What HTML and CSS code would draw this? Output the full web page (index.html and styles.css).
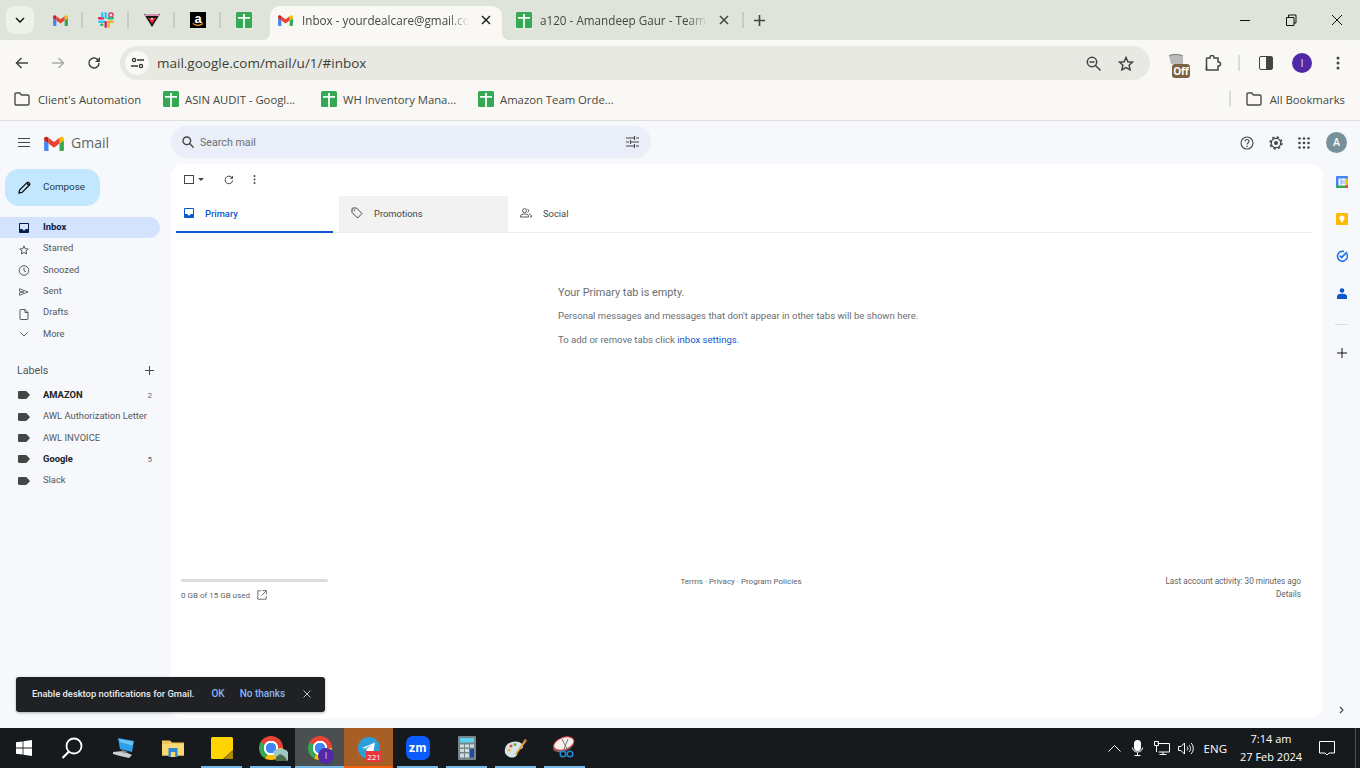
FILE: index.html
```html
<!DOCTYPE html>
<html lang="en">
<head>
    <meta charset="UTF-8">
    <title>Inbox - yourdealcare@gmail.com</title>
    <link rel="stylesheet" href="styles.css">
</head>

<body>
    <svg class="defs">
        <symbol id="ic-gmail" viewBox="0 0 52 42">
            <path fill="#4285f4" d="M3.5 42h8V22.5L0 14v24.5A3.5 3.5 0 0 0 3.5 42z"/>
            <path fill="#34a853" d="M40.5 42h8a3.5 3.5 0 0 0 3.5-3.5V14L40.5 22.5z"/>
            <path fill="#fbbc04" d="M40.5 7.5v15L52 14V9.5c0-4.3-4.9-6.7-8.3-4.2z"/>
            <path fill="#ea4335" d="M11.5 22.5v-15L26 18.4 40.5 7.5v15L26 33.4z"/>
            <path fill="#c5221f" d="M0 9.5V14l11.5 8.5v-15L8.3 5.3C4.9 2.8 0 5.2 0 9.5z"/>
        </symbol>
        <symbol id="ic-sheet" viewBox="0 0 16 16">
            <rect width="16" height="16" rx="1.5" fill="#34a853"/>
            <rect x="2" y="5" width="12" height="1.700" fill="#fff"/>
            <rect x="7.100" y="2" width="1.800" height="14" fill="#fff"/>
        </symbol>
        <symbol id="ic-folder" viewBox="0 0 16 14">
            <path fill="none" stroke="#4a4a46" stroke-width="1.4" d="M1 2.2c0-.7.5-1.2 1.2-1.2h3.6l1.6 2h6.4c.7 0 1.2.5 1.2 1.2v7.6c0 .7-.5 1.2-1.2 1.2H2.2c-.7 0-1.2-.5-1.2-1.2z"/>
        </symbol>
        <symbol id="ic-tag" viewBox="0 0 12 8">
            <path fill="#444746" d="M1.2 0h6.6c.4 0 .7.2 1 .5L12 4 8.800 7.500c-.3.3-.6.5-1 .5H1.200C.5 8 0 7.500 0 6.800V1.200C0 .5.500 0 1.200 0z"/>
        </symbol>
    </svg>

    <div class="tabstrip">
        <div class="tab-search">
            <svg width="10" height="6" viewBox="0 0 10 6"><path d="M1 1l4 4 4-4" fill="none" stroke="#1f1f1f" stroke-width="1.6"/></svg>
        </div>
        <div class="pinned">
            <svg width="15" height="12"><use href="#ic-gmail"/></svg>
        </div>
        <div class="pinned">
            <svg width="16" height="16" viewBox="0 0 16 16">
                <rect x="0" y="5" width="6" height="2.400" rx="1.200" fill="#e01e5a"/>
                <rect x="3" y="0" width="2.400" height="6" rx="1.200" fill="#36c5f0"/>
                <rect x="6.500" y="0" width="2.400" height="7" rx="1.200" fill="#36c5f0"/>
                <rect x="0" y="8.500" width="7" height="2.400" rx="1.200" fill="#36c5f0"/>
                <circle cx="13" cy="3" r="2.200" fill="none" stroke="#e01e5a" stroke-width="1.200"/>
                <rect x="9.500" y="5" width="6.500" height="2.400" rx="1.200" fill="#2eb67d"/>
                <rect x="9.500" y="8.500" width="6.500" height="2.400" rx="1.200" fill="#ecb22e"/>
                <rect x="9.500" y="9" width="2.400" height="7" rx="1.200" fill="#ecb22e"/>
                <rect x="6.500" y="9" width="2.400" height="7" rx="1.200" fill="#e01e5a"/>
                <rect x="2" y="11.500" width="3.500" height="2.400" rx="1.200" fill="#2eb67d"/>
            </svg>
        </div>
        <div class="pinned">
            <svg width="16" height="16" viewBox="0 0 16 16">
                <path d="M0 2h16L8 15z" fill="#111"/>
                <path d="M4 6h8l-4 6z" fill="#e2233d"/>
                <path d="M1 2h14v2H1z" fill="#d58fb0"/>
                <path d="M6.500 6h3L8 8.500z" fill="#dfe4da"/>
            </svg>
        </div>
        <div class="pinned">
            <svg width="16" height="16" viewBox="0 0 16 16">
                <rect width="16" height="16" fill="#000"/>
                <text x="8" y="10.500" text-anchor="middle" class="amz-a">a</text>
                <path d="M3 11.500c3 2.200 7 2.200 10 0" fill="none" stroke="#f59a23" stroke-width="1.300"/>
            </svg>
        </div>
        <div class="pinned last">
            <svg width="16" height="16"><use href="#ic-sheet"/></svg>
        </div>

        <div class="tab active">
            <svg width="15" height="12"><use href="#ic-gmail"/></svg>
            <span class="tab-title">Inbox - yourdealcare@gmail.com</span>
            <svg class="tab-x" width="10" height="10" viewBox="0 0 10 10"><path d="M1 1l8 8M9 1l-8 8" stroke="#1f1f1f" stroke-width="1.500"/></svg>
        </div>
        <div class="tab">
            <svg width="16" height="16"><use href="#ic-sheet"/></svg>
            <span class="tab-title">a120 - Amandeep Gaur - Team Tracker</span>
            <svg class="tab-x" width="10" height="10" viewBox="0 0 10 10"><path d="M1 1l8 8M9 1l-8 8" stroke="#444" stroke-width="1.500"/></svg>
        </div>
        <div class="tab-sep"></div>
        <svg class="new-tab" width="11" height="11" viewBox="0 0 11 11"><path d="M5.500 0v11M0 5.500h11" stroke="#444" stroke-width="1.600"/></svg>

        <div class="win-btns">
            <svg width="46" height="14" viewBox="0 0 46 14"><path d="M18 7.500h10" stroke="#111"/></svg>
            <svg width="46" height="14" viewBox="0 0 46 14"><path d="M18.500 4.500h7.500v8h-7.500zM20.500 4.500v-2.500h7.500v8h-2" fill="none" stroke="#111"/></svg>
            <svg width="46" height="14" viewBox="0 0 46 14"><path d="M18 2l10 10M28 2l-10 10" stroke="#111"/></svg>
        </div>
    </div>

    <div class="chrome-bar">
        <div class="toolbar">
            <svg class="nav-ic" width="14" height="12" viewBox="0 0 14 12"><path d="M13 6H2M6.500 1L1.500 6l5 5" fill="none" stroke="#444" stroke-width="1.500"/></svg>
            <svg class="nav-ic" width="14" height="12" viewBox="0 0 14 12"><path d="M1 6h11M7.500 1l5 5-5 5" fill="none" stroke="#aaa" stroke-width="1.500"/></svg>
            <svg class="nav-ic" width="14" height="14" viewBox="0 0 14 14"><path d="M12 7a5 5 0 1 1-1.500-3.600L12.500 5" fill="none" stroke="#444" stroke-width="1.500"/><path d="M13 1v5H8z" fill="#444"/></svg>
            <div class="omnibox">
                <div class="site-chip">
                    <svg width="13" height="12" viewBox="0 0 13 12"><g fill="none" stroke="#333" stroke-width="1.300"><circle cx="3" cy="3" r="1.600"/><path d="M6 3h7M0 9h7"/><circle cx="10" cy="9" r="1.600"/></g></svg>
                </div>
                <span class="url">mail.google.com/mail/u/1/#inbox</span>
                <svg class="omni-zoom" width="15" height="15" viewBox="0 0 15 15"><g fill="none" stroke="#444" stroke-width="1.500"><circle cx="6" cy="6" r="4.700"/><path d="M9.500 9.500l5 5M3.500 6h5"/></g></svg>
                <svg class="omni-star" width="16" height="15" viewBox="0 0 16 15"><path d="M8 1.500l1.900 4.200 4.600.5-3.400 3.100 1 4.500L8 11.500l-4.100 2.300 1-4.500L1.500 6.200l4.600-.5z" fill="none" stroke="#444" stroke-width="1.500"/></svg>
            </div>
            <div class="off-ext">
                <svg width="16" height="12" viewBox="0 0 16 12"><path d="M1 3c3-3 10-3 14 0v8H3z" fill="#bbb"/><path d="M1 3c3-2 10-2 14 0" fill="none" stroke="#777"/></svg>
                <span class="off-badge">Off</span>
            </div>
            <svg class="puzzle" width="17" height="17" viewBox="0 0 17 17"><path d="M1.500 3.500h3.500v-.5a2 2 0 0 1 4 0v.5h4v4h.5a2 2 0 0 1 0 4h-.5v4h-11.500v-3.500" fill="none" stroke="#444" stroke-width="1.500" transform="translate(0 -0.500)"/><path d="M1.500 3v12" stroke="#444" stroke-width="1.500"/></svg>
            <div class="tb-sep"></div>
            <div class="side-panel"><span></span></div>
            <div class="profile">I</div>
            <svg class="tb-more" width="4" height="14" viewBox="0 0 4 14"><g fill="#444"><circle cx="2" cy="2" r="1.500"/><circle cx="2" cy="7" r="1.500"/><circle cx="2" cy="12" r="1.500"/></g></svg>
        </div>

        <div class="bookmarks">
            <div class="bm bm-w1"><svg width="16" height="14"><use href="#ic-folder"/></svg>Client's Automation</div>
            <div class="bm bm-w2"><svg width="16" height="16"><use href="#ic-sheet"/></svg>ASIN AUDIT - Googl...</div>
            <div class="bm bm-w3"><svg width="16" height="16"><use href="#ic-sheet"/></svg>WH Inventory Mana...</div>
            <div class="bm"><svg width="16" height="16"><use href="#ic-sheet"/></svg>Amazon Team Orde...</div>
            <div class="bm-right">
                <div class="tb-sep"></div>
                <div class="bm"><svg width="16" height="14"><use href="#ic-folder"/></svg>All Bookmarks</div>
            </div>
        </div>
    </div>

    <div class="gmail">
        <div class="gm-head">
            <div class="brand">
                <div class="burger"><span></span><span></span><span></span></div>
                <svg width="20" height="16"><use href="#ic-gmail"/></svg>
                <span class="brand-name">Gmail</span>
            </div>
            <div class="search">
                <svg width="12" height="12" viewBox="0 0 12 12"><g fill="none" stroke="#444746" stroke-width="1.400"><circle cx="4.800" cy="4.800" r="3.800"/><path d="M7.600 7.600l4 4"/></g></svg>
                <span class="search-txt">Search mail</span>
                <svg class="search-opt" width="13" height="12" viewBox="0 0 13 12"><path d="M0 2h8M10 2h3M8.500 0v4M0 6h3M5 6h8M4.500 4v4M0 10h8M10 10h3M8.500 8v4" stroke="#444746" stroke-width="1.100"/></svg>
            </div>
            <div class="gm-actions">
                <svg width="14" height="14" viewBox="0 0 14 14"><circle cx="7" cy="7" r="6" fill="none" stroke="#444746" stroke-width="1.100"/><path d="M5 5.400c0-2.600 4-2.600 4 0 0 1.600-2 1.500-2 3.100" fill="none" stroke="#444746" stroke-width="1.100"/><circle cx="7" cy="10.300" r=".8" fill="#444746"/></svg>
                <svg width="14" height="14" viewBox="0 0 14 14"><circle cx="7" cy="7" r="4.700" fill="none" stroke="#444746" stroke-width="1.300"/><circle cx="7" cy="7" r="6" fill="none" stroke="#444746" stroke-width="1.400" stroke-dasharray="2.400 2.310"/><circle cx="7" cy="7" r="2" fill="#444746"/></svg>
                <svg width="12" height="12" viewBox="0 0 12 12"><g fill="#444746"><circle cx="1.500" cy="1.500" r="1.300"/><circle cx="6" cy="1.500" r="1.300"/><circle cx="10.500" cy="1.500" r="1.300"/><circle cx="1.500" cy="6" r="1.300"/><circle cx="6" cy="6" r="1.300"/><circle cx="10.500" cy="6" r="1.300"/><circle cx="1.500" cy="10.500" r="1.300"/><circle cx="6" cy="10.500" r="1.300"/><circle cx="10.500" cy="10.500" r="1.300"/></g></svg>
                <div class="gm-avatar">A</div>
            </div>
        </div>

        <div class="gm-body">
            <div class="sidebar">
                <div class="compose">
                    <svg width="13" height="13" viewBox="0 0 13 13"><path d="M1 12l.6-3L9 1.600a1.300 1.300 0 0 1 1.800 0l.6.6a1.300 1.300 0 0 1 0 1.800L4 11.400z" fill="none" stroke="#111" stroke-width="1.300"/><path d="M8 2.500L10.500 5 11.500 4 9.500 1.500z" fill="#111"/></svg>
                    <span>Compose</span>
                </div>
                <div class="nav">
                    <div class="nav-row selected">
                        <svg width="10" height="10" viewBox="0 0 10 10"><path fill="#041e49" d="M1 0h8a1 1 0 0 1 1 1v8a1 1 0 0 1-1 1H1a1 1 0 0 1-1-1V1a1 1 0 0 1 1-1zm0 1v5h2.500c0 .9.700 1.500 1.500 1.500S6.500 6.900 6.500 6H9V1z"/></svg>
                        <span>Inbox</span>
                    </div>
                    <div class="nav-row">
                        <svg class="low" width="10" height="10" viewBox="0 0 10 10"><path d="M5 .9l1.200 2.800 3 .3-2.300 2 .7 3L5 7.400 2.400 9l.7-3-2.300-2 3-.3z" fill="none" stroke="#444746" stroke-width=".9"/></svg>
                        <span>Starred</span>
                    </div>
                    <div class="nav-row">
                        <svg width="11" height="11" viewBox="0 0 11 11"><circle cx="5.500" cy="5.500" r="4.800" fill="none" stroke="#444746" stroke-width=".9"/><path d="M5.500 2.500v3.200l2 1.200" fill="none" stroke="#444746" stroke-width=".9"/></svg>
                        <span>Snoozed</span>
                    </div>
                    <div class="nav-row">
                        <svg width="10" height="8" viewBox="0 0 10 8"><path d="M.5.700L9 4 .5 7.300V4.900L5 4 .5 3.100z" fill="none" stroke="#444746" stroke-width=".8"/></svg>
                        <span>Sent</span>
                    </div>
                    <div class="nav-row">
                        <svg class="low" width="9" height="11" viewBox="0 0 9 11"><path d="M.5 1.200c0-.4.300-.7.700-.7h4.300l3 3v6.300c0 .4-.3.700-.7.700H1.200c-.4 0-.7-.3-.7-.7z M5.500.5v3h3" fill="none" stroke="#444746" stroke-width=".9"/></svg>
                        <span>Drafts</span>
                    </div>
                    <div class="nav-row">
                        <svg width="8" height="5" viewBox="0 0 8 5"><path d="M.5.500L4 4 7.500.5" fill="none" stroke="#444746" stroke-width=".9"/></svg>
                        <span>More</span>
                    </div>
                </div>
                <div class="labels-head">
                    <span>Labels</span>
                    <svg width="9" height="9" viewBox="0 0 9 9"><path d="M4.500 0v9M0 4.500h9" stroke="#444746"/></svg>
                </div>
                <div class="nav">
                    <div class="nav-row unread"><svg width="11" height="8"><use href="#ic-tag"/></svg><span>AMAZON</span><em>2</em></div>
                    <div class="nav-row"><svg width="11" height="8"><use href="#ic-tag"/></svg><span>AWL Authorization Letter</span></div>
                    <div class="nav-row"><svg width="11" height="8"><use href="#ic-tag"/></svg><span>AWL INVOICE</span></div>
                    <div class="nav-row unread"><svg width="11" height="8"><use href="#ic-tag"/></svg><span>Google</span><em>5</em></div>
                    <div class="nav-row"><svg width="11" height="8"><use href="#ic-tag"/></svg><span>Slack</span></div>
                </div>
            </div>

            <div class="card">
                <div class="mail-tools">
                    <span class="check"></span>
                    <span class="caret"></span>
                    <svg class="refresh" width="10" height="10" viewBox="0 0 10 10"><path d="M8.700 5.500A3.800 3.800 0 1 1 7.600 2.200" fill="none" stroke="#444746" stroke-width="1"/><path d="M9 .5v3.300H5.700z" fill="#444746"/></svg>
                    <svg class="dots" width="3" height="9" viewBox="0 0 3 9"><g fill="#444746"><circle cx="1.500" cy="1.100" r="1"/><circle cx="1.500" cy="4.500" r="1"/><circle cx="1.500" cy="7.900" r="1"/></g></svg>
                </div>
                <div class="mail-tabs">
                    <div class="mail-tab primary">
                        <svg width="10" height="10" viewBox="0 0 10 10"><path fill="#0b57d0" d="M1 0h8a1 1 0 0 1 1 1v8a1 1 0 0 1-1 1H1a1 1 0 0 1-1-1V1a1 1 0 0 1 1-1zm0 1v5h2.500c0 .9.700 1.500 1.500 1.500S6.500 6.900 6.500 6H9V1z"/></svg>
                        <span>Primary</span>
                    </div>
                    <div class="mail-tab promo">
                        <svg width="12" height="12" viewBox="0 0 12 12"><path d="M1 2c0-.6.400-1 1-1h3.500L11 6.500 6.500 11 1 5.500z" fill="none" stroke="#444746"/><circle cx="3.300" cy="3.300" r=".8" fill="#444746"/></svg>
                        <span>Promotions</span>
                    </div>
                    <div class="mail-tab social">
                        <svg width="12" height="10" viewBox="0 0 12 10"><g fill="none" stroke="#444746" stroke-width=".9"><circle cx="4.500" cy="2.700" r="2"/><path d="M.5 9V8c0-1.300 2-2 4-2s4 .7 4 2v1z"/><path d="M7.500.9a2 2 0 0 1 0 3.600M9 6.200c1.400.3 2.500 1 2.500 1.900V9h-1.500"/></g></svg>
                        <span>Social</span>
                    </div>
                </div>
                <div class="empty">
                    <p class="empty-title">Your Primary tab is empty.</p>
                    <p>Personal messages and messages that don't appear in other tabs will be shown here.</p>
                    <p>To add or remove tabs click <a href="#">inbox settings.</a></p>
                </div>
                <div class="mail-foot">
                    <div class="storage">
                        <div class="storage-bar"></div>
                        <div class="storage-txt">0 GB of 15 GB used
                            <svg width="10" height="10" viewBox="0 0 10 10"><path d="M4 .8H.8v8.400h8.400V6M5.500.6h3.900v3.900M9.200.8L4.500 5.500" fill="none" stroke="#5f6368" stroke-width=".9"/></svg>
                        </div>
                    </div>
                    <div class="foot-links">Terms · Privacy · Program Policies</div>
                    <div class="activity">Last account activity: 30 minutes ago<br>Details</div>
                </div>
            </div>

            <div class="rail">
                <svg width="12" height="12" viewBox="0 0 12 12"><rect width="12" height="12" rx="1" fill="#4285f4"/><rect x="0" y="9.500" width="9.500" height="2.500" fill="#34a853"/><rect x="9.500" y="2.500" width="2.500" height="7" fill="#fbbc04"/><rect x="9.500" y="9.500" width="2.500" height="2.500" fill="#ea4335"/><rect x="2.500" y="2.500" width="7" height="7" fill="#fff"/><path d="M4 4h2M6 4v4M4 6h2M4 8h2M8 4v4" stroke="#4285f4" stroke-width=".7" fill="none"/></svg>
                <svg width="12" height="12" viewBox="0 0 12 12"><rect width="12" height="12" rx="1.300" fill="#fbbc04"/><circle cx="6" cy="5" r="2.500" fill="#fff"/><rect x="4.700" y="7.500" width="2.600" height="1.600" fill="#fff"/></svg>
                <svg width="12" height="12" viewBox="0 0 12 12"><path d="M10.700 3.600A5 5 0 1 1 8 1.500" fill="none" stroke="#1a73e8" stroke-width="1.600"/><path d="M3.800 5.700L5.600 7.500 11 2" fill="none" stroke="#1a73e8" stroke-width="1.700"/></svg>
                <svg class="rail-person" width="10" height="11" viewBox="0 0 10 11"><circle cx="5" cy="2.500" r="2.300" fill="#0b57d0"/><path d="M0 8.500C0 6.500 2.500 5.800 5 5.800s5 .7 5 2.700V11H0z" fill="#0b57d0"/></svg>
                <div class="rail-sep"></div>
                <svg width="10" height="10" viewBox="0 0 10 10"><path d="M5 0v10M0 5h10" stroke="#111"/></svg>
                <svg class="rail-chev" width="5" height="8" viewBox="0 0 5 8"><path d="M1 1l3 3-3 3" fill="none" stroke="#444746" stroke-width="1.100"/></svg>
            </div>
        </div>

        <div class="toast">
            <span class="toast-msg">Enable desktop notifications for Gmail.</span>
            <span class="toast-ok">OK</span>
            <span class="toast-no">No thanks</span>
            <svg width="8" height="8" viewBox="0 0 8 8"><path d="M.5.500l7 7M7.500.5l-7 7" stroke="#bdc1c6"/></svg>
        </div>
    </div>

    <div class="taskbar">
        <div class="task">
            <svg width="16" height="16" viewBox="0 0 16 16"><path fill="#fff" d="M0 2.300l6.600-.9v6.200H0zM7.400 1.300L16 0v7.600H7.400zM0 8.400h6.600v6.200L0 13.700zM7.400 8.400H16V16l-8.600-1.200z"/></svg>
        </div>
        <div class="task">
            <svg width="22" height="22" viewBox="0 0 22 22"><circle cx="13" cy="9" r="7.500" fill="none" stroke="#fff" stroke-width="1.800"/><path d="M8 14.500L1.500 21" stroke="#fff" stroke-width="2.200"/></svg>
        </div>
        <div class="task">
            <svg width="24" height="22" viewBox="0 0 24 22"><path d="M6 1l16 3-2 11-12-3z" fill="#2f9fe6"/><path d="M7 2l14 2.600-.8 4L8 5z" fill="#6cc5f5"/><path d="M1 15l10-1 9 4-3 3-9-2-7-2z" fill="#c9ced1"/><path d="M10 13l5 1.500-1 2-5-1.500z" fill="#8a9297"/></svg>
        </div>
        <div class="task">
            <svg width="22" height="18" viewBox="0 0 22 18"><path d="M0 1.500h8l2 2h12v13H0z" fill="#f4c45a"/><rect y="5" width="22" height="11.500" fill="#f8d775"/><rect x="6.500" y="9" width="9" height="9" fill="#2b88d8"/><rect x="8.800" y="13" width="4.400" height="5" fill="#f8d775"/></svg>
        </div>
        <div class="task open">
            <svg width="22" height="22" viewBox="0 0 22 22"><rect width="22" height="22" rx="1.500" fill="#ffd400"/><path d="M22 13v9H12z" fill="#3b3a30"/><path d="M13 21.800L21.800 13.500 22 22z" fill="#b38a00"/></svg>
        </div>
        <div class="task open">
            <span class="chrome-ic"></span>
            <svg class="chrome-photo" width="15" height="13" viewBox="0 0 15 13"><path d="M0 4c3-4 10-5 15 0v9H3z" fill="#9fc7c2"/><path d="M3 9l4-3 4 2 4 5H3z" fill="#4c6b4c"/></svg>
        </div>
        <div class="task open active-app">
            <span class="chrome-ic"></span>
            <span class="chrome-badge">I</span>
        </div>
        <div class="task open attention">
            <svg width="24" height="24" viewBox="0 0 24 24"><circle cx="12" cy="12" r="11" fill="#2a9fdc"/><path d="M5 12L18 6.500 16 18l-4-3-2 2-.7-4 6-4.500-7.500 4z" fill="#fff"/></svg>
            <span class="tg-count">221</span>
        </div>
        <div class="task open">
            <div class="zoom-ic">zm</div>
        </div>
        <div class="task open">
            <svg width="18" height="24" viewBox="0 0 18 24"><rect width="18" height="24" rx="1" fill="#76848c"/><rect x="2" y="2" width="14" height="4.500" fill="#5fd0ee"/><g fill="#d3dbdf"><rect x="2" y="8.500" width="4" height="3"/><rect x="7" y="8.500" width="4" height="3"/><rect x="12" y="8.500" width="4" height="3"/><rect x="2" y="13" width="4" height="3"/><rect x="7" y="13" width="4" height="3"/><rect x="2" y="17.500" width="4" height="4"/><rect x="7" y="17.500" width="4" height="4"/></g><rect x="12" y="13" width="4" height="8.500" fill="#1e4e9a"/></svg>
        </div>
        <div class="task open">
            <svg width="24" height="22" viewBox="0 0 24 22"><path d="M1 12C2 6 9 3 15 5c5 2 5 6 2 7-3 .8-3 3-4 6-2 3-5 3-8 2-3-2-5-4-4-8z" fill="#d7e5ea"/><circle cx="7" cy="9" r="1.600" fill="#e34b4b"/><circle cx="11" cy="7.500" r="1.600" fill="#65b54d"/><circle cx="5" cy="13" r="1.600" fill="#f1b93b"/><path d="M21 2l2 1.500L13 17l-2.500 1z" fill="#e9992f"/><path d="M21 2l2 1.500-1.400 1.700L19.600 4z" fill="#9d7a54"/></svg>
        </div>
        <div class="task open">
            <svg width="24" height="24" viewBox="0 0 24 24"><ellipse cx="11" cy="9" rx="11" ry="6.500" fill="#7a6767" transform="rotate(-20 11 11)"/><ellipse cx="11" cy="7.500" rx="10.500" ry="6" fill="#f4f0ec" stroke="#d33a45" transform="rotate(-20 11 8)"/><path d="M9 3l5 10M15 3l-4 10" stroke="#777" fill="none"/><circle cx="10" cy="18" r="2.800" fill="none" stroke="#1f8bd6" stroke-width="1.500"/><circle cx="17" cy="18" r="2.800" fill="none" stroke="#1f8bd6" stroke-width="1.500"/></svg>
        </div>

        <div class="tray">
            <svg width="13" height="7" viewBox="0 0 13 7"><path d="M.5 6.500l6-6 6 6" fill="none" stroke="#fff"/></svg>
            <svg class="tray-mic" width="11" height="16" viewBox="0 0 11 16"><rect x="2" y="0" width="7" height="11" rx="3.500" fill="#fff"/><path d="M.5 7.500c0 6 10 6 10 0M5.500 12.500V15M2.500 15.500h6" fill="none" stroke="#fff"/></svg>
            <svg class="tray-net" width="16" height="14" viewBox="0 0 16 14"><path d="M3.500 2.500H15.500v8.500H4.500M9 11v2.500M5.500 13.500h7M.5.500h4v4h-4zM2.500 4.500V11" fill="none" stroke="#fff"/></svg>
            <svg class="tray-vol" width="16" height="13" viewBox="0 0 16 13"><path d="M.5 4.500h2.500L6.500 1v11L3 8.500H.5zM9 4.500c1 1 1 3 0 4M11 3c2 2 2 5 0 7M13 1c3 3 3 8 0 11" fill="none" stroke="#fff"/></svg>
            <span class="tray-lang">ENG</span>
            <div class="clock">7:14 am<br>27 Feb 2024</div>
            <svg class="notif" width="16" height="15" viewBox="0 0 16 15"><path d="M.5.500h15v11.500H10l-2 2-2-2H.5z" fill="none" stroke="#fff"/></svg>
            <div class="show-desk"></div>
        </div>
    </div>
</body>

</html>
```

FILE: styles.css
```css
* {
    box-sizing: border-box;
}

html,
body {
    margin: 0;
    height: 100%;
}

body {
    width: 1360px;
    height: 768px;
    overflow: hidden;
    display: flex;
    flex-direction: column;
    background-color: #f6f8fc;
    font-family: "Roboto", "Liberation Sans", sans-serif;
    color: #444746;
}

svg {
    flex: none;
    display: block;
}

.defs {
    display: none;
}

/* browser tabs */
.tabstrip {
    height: 40px;
    flex: none;
    display: flex;
    align-items: flex-start;
    padding-left: 6px;
    background-color: #dfe4da;
    font-family: "Open Sans", "Liberation Sans", sans-serif;
    font-size: 11.700px;
}

.tab-search {
    width: 28px;
    height: 28px;
    margin: 6px 3px 0 0;
    border-radius: 8px;
    background-color: #ecf2e7;
    display: flex;
    align-items: center;
    justify-content: center;
}

.pinned {
    width: 46px;
    height: 16px;
    margin-top: 12px;
    padding-left: 2px;
    display: flex;
    align-items: center;
    justify-content: center;
    border-right: 2px solid #c5cdc0;
}

.pinned.last {
    padding-left: 0;
    border-right: none;
}

.amz-a {
    fill: #fff;
    font-family: "Liberation Sans", sans-serif;
    font-size: 13px;
    font-weight: 700;
}

.tab {
    width: 232px;
    height: 34px;
    margin: 6px 6px 0 0;
    padding: 0 11px 6px 8px;
    display: flex;
    align-items: center;
    position: relative;
    color: #45483f;
}

.tab.active {
    margin-left: 3px;
    background-color: #faf8f4;
    border-radius: 10px 10px 0 0;
}

.tab.active::before,
.tab.active::after {
    content: "";
    position: absolute;
    bottom: 0;
    width: 8px;
    height: 8px;
}

.tab.active::before {
    left: -8px;
    background: radial-gradient(circle at 0 0, transparent 8px, #faf8f4 8.500px);
}

.tab.active::after {
    right: -8px;
    background: radial-gradient(circle at 100% 0, transparent 8px, #faf8f4 8.500px);
}

.tab-title {
    flex: 1;
    margin: 0 12px 0 9px;
    white-space: nowrap;
    overflow: hidden;
    -webkit-mask-image: linear-gradient(to right, #000 88%, transparent);
    mask-image: linear-gradient(to right, #000 88%, transparent);
}

.tab:not(.active) .tab-title {
    margin-left: 8px;
}

.tab-sep {
    width: 2px;
    height: 16px;
    margin: 12px 0 0 -4px;
    background-color: #c5cdc0;
}

.new-tab {
    margin: 15px 0 0 10px;
}

.win-btns {
    margin: 13px 0 0 auto;
    display: flex;
}

/* toolbar and bookmarks */
.chrome-bar {
    flex: none;
    height: 81px;
    background-color: #faf8f4;
    border-radius: 8px 8px 0 0;
    border-bottom: 1px solid #e0e0db;
    font-family: "Open Sans", "Liberation Sans", sans-serif;
    color: #45483f;
}

.toolbar {
    height: 40px;
    padding-top: 6px;
    display: flex;
    align-items: center;
}

.nav-ic {
    margin-left: 15px;
    margin-right: 7px;
}

.omnibox {
    width: 1030px;
    height: 34px;
    margin-left: 12px;
    padding: 0 16px 0 5px;
    display: flex;
    align-items: center;
    border-radius: 17px;
    background-color: #e8e9e2;
}

.site-chip {
    width: 24px;
    height: 24px;
    border-radius: 50%;
    background-color: #faf8f4;
    display: flex;
    align-items: center;
    justify-content: center;
}

.url {
    margin-left: 8px;
    font-size: 13.500px;
    color: #3d3f3a;
}

.omni-zoom {
    margin-left: auto;
}

.omni-star {
    margin-left: 17px;
}

.off-ext {
    width: 24px;
    height: 24px;
    margin-left: 18px;
    position: relative;
}

.off-ext svg {
    margin-top: 2px;
}

.off-badge {
    position: absolute;
    left: 4px;
    bottom: -3px;
    width: 18px;
    height: 14px;
    border-radius: 3px;
    background-color: #7f6244;
    color: #fff;
    font-size: 10px;
    font-weight: 700;
    line-height: 14px;
    text-align: center;
}

.puzzle {
    margin-left: 13px;
}

.tb-sep {
    width: 2px;
    height: 16px;
    background-color: #d6e0cd;
}

.toolbar .tb-sep {
    margin-left: 16px;
}

.side-panel {
    width: 14px;
    height: 14px;
    margin-left: 19px;
    border: 1.500px solid #444;
    border-radius: 2px;
    display: flex;
    justify-content: flex-end;
}

.side-panel span {
    width: 6px;
    background-color: #444;
}

.profile {
    width: 20px;
    height: 20px;
    margin-left: 19px;
    border-radius: 50%;
    background-color: #5128a8;
    color: #ddd;
    font-size: 11px;
    line-height: 20px;
    text-align: center;
}

.tb-more {
    margin-left: 24px;
}

.bookmarks {
    height: 40px;
    padding: 0 0 2px 14px;
    display: flex;
    align-items: center;
    font-size: 11.300px;
}

.bm {
    display: flex;
    align-items: center;
    gap: 6px;
    white-space: nowrap;
    width: 158px;
}

.bm-w1 {
    width: 149px;
    gap: 8px;
}

.bm-w3 {
    width: 157px;
}

.bm-right {
    margin-left: auto;
    margin-right: 15px;
    display: flex;
    align-items: center;
    gap: 15px;
}

.bm-right .bm {
    width: auto;
    gap: 8px;
}

/* gmail */
.gmail {
    flex: 1;
    position: relative;
    min-height: 0;
    display: flex;
    flex-direction: column;
}

.gm-head {
    height: 43px;
    flex: none;
    display: flex;
}

.brand {
    width: 171px;
    padding: 0 0 0 18px;
    display: flex;
    align-items: center;
}

.burger {
    width: 12px;
    margin-right: 14px;
    display: flex;
    flex-direction: column;
    gap: 3px;
}

.burger span {
    height: 1px;
    background-color: #444746;
}

.brand-name {
    margin-left: 7px;
    font-family: "Open Sans", "Liberation Sans", sans-serif;
    font-size: 14px;
    color: #5f6368;
}

.search {
    width: 480px;
    height: 32px;
    margin-top: 5px;
    padding: 0 12px 0 11px;
    display: flex;
    align-items: center;
    border-radius: 16px;
    background-color: #e9eef8;
}

.search-txt {
    margin-left: 6px;
    font-size: 10.700px;
    color: #6b6f73;
}

.search-opt {
    margin-left: auto;
}

.gm-actions {
    margin-left: auto;
    padding-right: 13px;
    display: flex;
    align-items: center;
    gap: 15px;
}

.gm-avatar {
    width: 21px;
    height: 21px;
    margin-left: 1px;
    border-radius: 50%;
    background-color: #78909c;
    color: #fff;
    font-size: 10.500px;
    font-weight: 500;
    line-height: 21px;
    text-align: center;
}

.gm-body {
    height: 554px;
    flex: none;
    display: flex;
}

.sidebar {
    width: 171px;
    flex: none;
    font-size: 9.400px;
    color: #54575a;
}

.compose {
    width: 95px;
    height: 37px;
    margin: 5px 0 11px 5px;
    padding-left: 13px;
    display: flex;
    align-items: center;
    gap: 12px;
    border-radius: 14px;
    background-color: #c2e7ff;
    color: #1f3a4d;
    font-size: 9.800px;
}

.compose span {
    margin-bottom: 2px;
}

.nav-row {
    width: 160px;
    height: 21.300px;
    padding: 0 8px 0 18px;
    display: flex;
    align-items: center;
    border-radius: 0 11px 11px 0;
}

.nav-row svg {
    width: 12px;
}

.nav-row span {
    margin: 0 0 2px 13px;
    flex: 1;
}

.nav-row.selected {
    background-color: #d3e3fd;
    color: #041e49;
    font-weight: 700;
}

.nav-row .low {
    margin-top: 3px;
}

.nav-row.unread {
    font-weight: 700;
    color: #202124;
}

.nav-row em {
    font-style: normal;
    font-weight: 400;
    font-size: 8px;
    color: #5f6368;
}

.labels-head {
    width: 160px;
    height: 22px;
    margin: 15px 0 3px;
    padding: 0 6px 0 17px;
    display: flex;
    align-items: center;
    justify-content: space-between;
    font-size: 10.700px;
}

.card {
    width: 1152px;
    flex: none;
    display: flex;
    flex-direction: column;
    border-radius: 12px;
    background-color: #fff;
}

.mail-tools {
    height: 32px;
    padding: 0 0 1px 13px;
    display: flex;
    align-items: center;
}

.check {
    width: 9.500px;
    height: 9.500px;
    border: 1px solid #444746;
}

.caret {
    margin-left: 4px;
    border-top: 3px solid #444746;
    border-left: 3px solid transparent;
    border-right: 3px solid transparent;
}

.refresh {
    margin-left: 20px;
}

.dots {
    margin-left: 19px;
}

.mail-tabs {
    height: 37px;
    margin: 0 11px 0 5px;
    display: flex;
    border-bottom: 1px solid #eeeeee;
    font-size: 9.400px;
}

.mail-tab {
    display: flex;
    align-items: center;
    height: 36px;
    padding-bottom: 2px;
}

.primary {
    width: 157px;
    height: 37px;
    padding: 0 0 1px 8px;
    gap: 11px;
    border-bottom: 2px solid #0b57d0;
    color: #0b57d0;
    font-weight: 500;
}

.promo {
    width: 169px;
    margin-left: 6px;
    padding-left: 12px;
    gap: 11px;
    background-color: #f2f2f2;
}

.social {
    padding-left: 12px;
    gap: 11px;
}

.empty {
    height: 345px;
    padding: 53px 0 0 387px;
    font-size: 9.550px;
    color: #6a6e72;
}

.empty p {
    margin: 0;
    height: 24px;
    line-height: 14px;
}

.empty .empty-title {
    height: 23px;
    font-size: 10.850px;
}

.empty a {
    color: #0b57d0;
    text-decoration: none;
}

.mail-foot {
    display: grid;
    grid-template-columns: 1fr auto 1fr;
    padding: 0 22px 0 10px;
    font-size: 8px;
    color: #5f6368;
}

.storage-bar {
    width: 147px;
    height: 3px;
    margin-top: 1px;
    border-radius: 2px;
    background-color: #dadce0;
}

.storage-txt {
    margin-top: 8px;
    display: flex;
    align-items: center;
    gap: 7px;
}

.activity {
    margin-top: -3px;
    font-size: 8.200px;
    text-align: right;
    line-height: 13px;
}

.foot-links {
    margin-top: -3px;
    line-height: 13px;
}

.rail {
    flex: 1;
    padding-top: 12px;
    display: flex;
    flex-direction: column;
    align-items: center;
    gap: 25px;
}

.rail-person {
    margin-top: 1px;
}

.rail-sep {
    width: 13px;
    height: 1px;
    margin: 0 0 -2px;
    background-color: #dadce0;
}

.rail-chev {
    margin-top: auto;
    margin-bottom: 4px;
}

.toast {
    position: absolute;
    left: 16px;
    bottom: 16px;
    width: 309px;
    height: 35px;
    padding: 0 14px 2px 16px;
    display: flex;
    align-items: center;
    border-radius: 3px;
    background-color: #202124;
    box-shadow: 0 1px 3px rgba(0, 0, 0, 0.3);
    color: #e8eaed;
    font-size: 9.400px;
    font-weight: 500;
}

.toast-ok {
    margin-left: 17px;
    color: #8ab4f8;
    font-size: 10px;
}

.toast-no {
    margin-left: 15px;
    color: #8ab4f8;
    font-size: 10px;
}

.toast svg {
    margin-left: auto;
}

/* windows taskbar */
.taskbar {
    height: 40px;
    flex: none;
    display: flex;
    background-color: #171a1c;
    color: #fff;
    font-family: "Open Sans", "Liberation Sans", sans-serif;
}

.task {
    width: 49px;
    height: 40px;
    position: relative;
    display: flex;
    align-items: center;
    justify-content: center;
}

.task:first-child {
    width: 48px;
}

.task:nth-child(2) {
    width: 48px;
    margin-right: 3px;
}

.task.open::after {
    content: "";
    position: absolute;
    left: 4px;
    right: 4px;
    bottom: 0;
    height: 2px;
    background-color: #76b9ed;
}

.active-app {
    background-color: #4a4f50;
}

.attention {
    background-color: #a85f26;
}

.task.attention::after {
    left: 0;
    right: 0;
    background-color: #f7630c;
}

.task.active-app::after {
    left: 0;
    right: 0;
}

.chrome-ic {
    width: 24px;
    height: 24px;
    border-radius: 50%;
    background:
        radial-gradient(circle, #4285f4 0 5px, #fff 5.500px 7px, transparent 7.500px),
        conic-gradient(from -60deg, #ea4335 0 150deg, #fbbc04 150deg 270deg, #34a853 270deg);
}

.chrome-photo {
    position: absolute;
    left: 27px;
    top: 20px;
}

.chrome-badge {
    position: absolute;
    left: 23px;
    top: 20px;
    width: 16px;
    height: 16px;
    border-radius: 50%;
    background-color: #5128a8;
    color: #ddd;
    font-size: 9px;
    line-height: 16px;
    text-align: center;
}

.tg-count {
    position: absolute;
    left: 22px;
    top: 23px;
    width: 16px;
    height: 11px;
    background-color: #e8363d;
    color: #fff;
    font-size: 8px;
    line-height: 11px;
    text-align: center;
}

.zoom-ic {
    width: 24px;
    height: 24px;
    border-radius: 7px;
    background-color: #0b5cff;
    color: #fff;
    font-family: "Inter", "Liberation Sans", sans-serif;
    font-size: 12px;
    font-weight: 700;
    line-height: 23px;
    text-align: center;
}

.tray {
    margin-left: auto;
    display: flex;
    align-items: center;
    font-size: 11px;
}

.tray-mic {
    margin-left: 11px;
}

.tray-net {
    margin-left: 11px;
}

.tray-vol {
    margin-left: 8px;
}

.tray-lang {
    margin-left: 10px;
    font-size: 11.500px;
}

.clock {
    width: 80px;
    margin-left: 4px;
    line-height: 18px;
    text-align: center;
}

.notif {
    margin-left: 8px;
}

.show-desk {
    width: 1px;
    height: 40px;
    margin: 0 4px 0 20px;
    background-color: #4a4f50;
}
```
